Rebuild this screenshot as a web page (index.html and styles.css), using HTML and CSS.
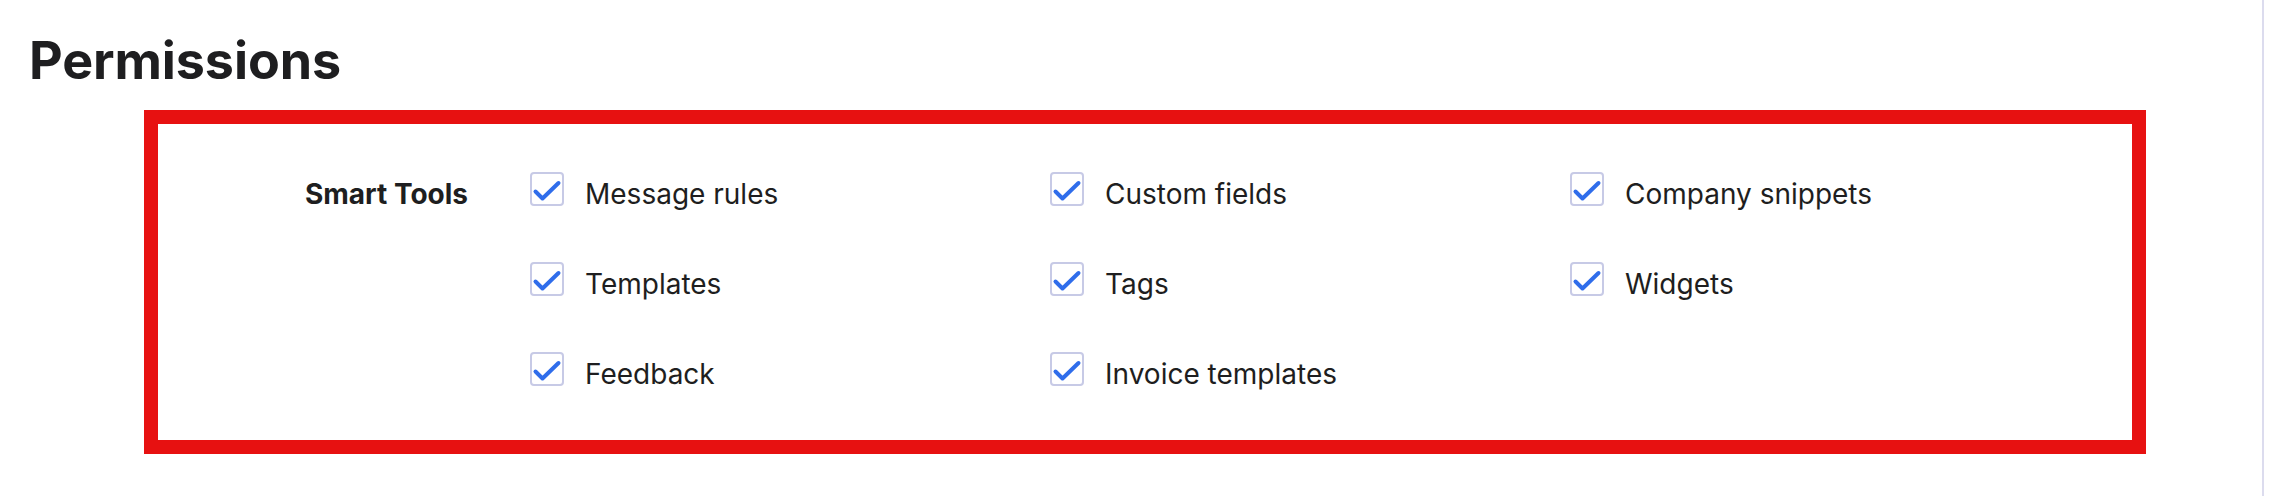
FILE: index.html
```html
<!DOCTYPE html>
<html lang="en">
<head>
<meta charset="utf-8">
<title>Permissions</title>
<link rel="stylesheet" href="styles.css">
</head>
<body>
<div class="page">
  <h1 class="title">Permissions</h1>
  <section class="perm-box">
    <div class="perm-label">Smart Tools</div>
    <div class="perm-grid">
      <label class="item"><span class="cb"><svg viewBox="0 0 34 34"><polyline points="5.5,19.5 12.5,26.5 28.5,11"/></svg></span><span class="txt">Message rules</span></label>
      <label class="item"><span class="cb"><svg viewBox="0 0 34 34"><polyline points="5.5,19.5 12.5,26.5 28.5,11"/></svg></span><span class="txt">Custom fields</span></label>
      <label class="item"><span class="cb"><svg viewBox="0 0 34 34"><polyline points="5.5,19.5 12.5,26.5 28.5,11"/></svg></span><span class="txt">Company snippets</span></label>
      <label class="item"><span class="cb"><svg viewBox="0 0 34 34"><polyline points="5.5,19.5 12.5,26.5 28.5,11"/></svg></span><span class="txt">Templates</span></label>
      <label class="item"><span class="cb"><svg viewBox="0 0 34 34"><polyline points="5.5,19.5 12.5,26.5 28.5,11"/></svg></span><span class="txt">Tags</span></label>
      <label class="item"><span class="cb"><svg viewBox="0 0 34 34"><polyline points="5.5,19.5 12.5,26.5 28.5,11"/></svg></span><span class="txt">Widgets</span></label>
      <label class="item"><span class="cb"><svg viewBox="0 0 34 34"><polyline points="5.5,19.5 12.5,26.5 28.5,11"/></svg></span><span class="txt">Feedback</span></label>
      <label class="item"><span class="cb"><svg viewBox="0 0 34 34"><polyline points="5.5,19.5 12.5,26.5 28.5,11"/></svg></span><span class="txt">Invoice templates</span></label>
    </div>
  </section>
</div>
</body>
</html>
```

FILE: styles.css
```css
html, body {
  margin: 0;
  padding: 0;
  background: #ffffff;
}

body {
  font-family: Inter, "Noto Sans", "Liberation Sans", sans-serif;
  color: #1e1e20;
}

.page {
  width: 2264px;
  height: 496px;
  box-sizing: border-box;
  border-right: 2px solid #dcdcee;
  padding-top: 29px;
}

.title {
  margin: 0 0 18px 29px;
  font-size: 52px;
  line-height: 63px;
  font-weight: 700;
  color: #1e1e20;
  letter-spacing: -0.1px;
}

.perm-box {
  margin-left: 144px;
  width: 2002px;
  box-sizing: border-box;
  border: 14px solid #e71111;
  padding: 48px 0 44px 0;
  display: flex;
  align-items: flex-start;
}

.perm-label {
  width: 310px;
  text-align: right;
  font-size: 28px;
  line-height: 44px;
  font-weight: 700;
  color: #1e1e20;
  margin-right: 62px;
}

.perm-grid {
  display: grid;
  grid-template-columns: repeat(3, 520px);
  row-gap: 46px;
}

.item {
  display: flex;
  align-items: flex-start;
}

.cb {
  width: 34px;
  height: 34px;
  box-sizing: border-box;
  border: 2px solid #c7cae6;
  border-radius: 4px;
  background: #ffffff;
  margin-right: 21px;
  flex: none;
  display: block;
  position: relative;
}

.cb svg {
  position: absolute;
  left: -2px;
  top: -2px;
  width: 34px;
  height: 34px;
}

.cb polyline {
  fill: none;
  stroke: #2f6deb;
  stroke-width: 4;
  stroke-linecap: round;
  stroke-linejoin: round;
}

.txt {
  font-size: 28px;
  line-height: 44px;
  font-weight: 400;
  color: #1e1e20;
}
```
